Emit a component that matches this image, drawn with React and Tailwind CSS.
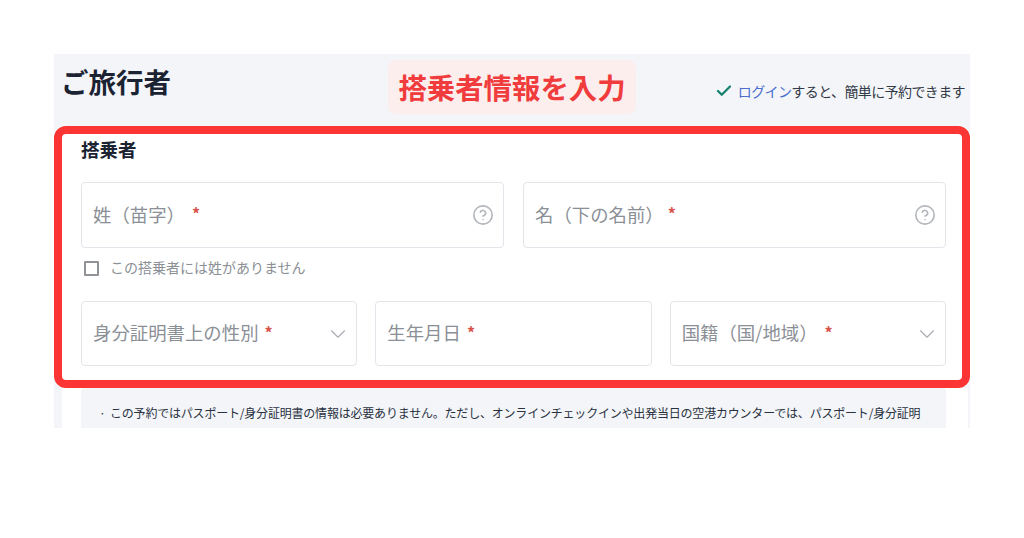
import React from 'react';
import { Check, CircleHelp, ChevronDown } from 'lucide-react';

const font = "font-['Noto_Sans_CJK_JP','Noto_Sans',sans-serif]";

// required mark next to placeholders
const Star = ({ className = '' }) => (
  <span className={`mt-[-2px] text-[16px] leading-none font-bold text-[#d8534c] ${className}`}>*</span>
);

const Field = ({ label, gap = 'ml-[7px]', icon, className = '' }) => (
  <div className={`flex items-center justify-between rounded-[4px] border border-[#e3e5ea] bg-white ${className}`}>
    <div className="mt-[-2px] flex items-center text-[18.4px] leading-none text-[#8b8f96]">
      <span>{label}</span>
      <Star className={gap} />
    </div>
    {icon}
  </div>
);

const HelpIcon = () => <CircleHelp size={22} strokeWidth={1.8} className="text-[#b4b7bc]" />;
const Chevron = () => <ChevronDown size={26} strokeWidth={1} className="text-[#a9acb2]" />;

export default function App() {
  return (
    <div className={`min-h-[538px] bg-white pt-[54px] pl-[54px] ${font}`}>
      <div className="h-[374px] w-[916px] overflow-hidden bg-[#f3f5f9]">
        {/* header */}
        <div className="flex h-[72px] items-start">
          <h1 className="mt-[7px] ml-[7px] w-[327px] text-[27.5px] leading-[40px] font-bold text-[#1b2333]">ご旅行者</h1>
          <div className="mt-[6px] flex h-[54px] w-[248px] items-center justify-center rounded-[8px] bg-[#fdeeee] text-[28.4px] font-bold text-[#f03c3c]">
            搭乗者情報を入力
          </div>
          <div className="mt-[27px] ml-auto mr-[5px] flex items-center text-[14px] leading-5 tracking-[-0.6px] text-[#333a47]">
            <Check size={18} strokeWidth={3} className="mr-[5px] text-[#16806f]" />
            <span className="text-[#4a6fd0]">ログイン</span>
            <span>すると、簡単に予約できます</span>
          </div>
        </div>

        {/* passenger form */}
        <div className="h-[262px] rounded-[12px] border-8 border-[#fb3434] bg-white pt-[3px] pr-[16px] pl-[19px]">
          <h2 className="text-[18.5px] leading-6 font-bold text-[#1b2333]">搭乗者</h2>
          <div className="mt-[21px] flex gap-[19px]">
            <Field label="姓（苗字）" icon={<HelpIcon />} className="h-[66px] flex-1 pr-[9px] pl-[11px]" />
            <Field label="名（下の名前）" gap="ml-[4px]" icon={<HelpIcon />} className="h-[66px] flex-1 pr-[9px] pl-[11px]" />
          </div>
          <label className="mt-[10px] flex h-[20px] items-center pl-[3px] text-[14px] leading-none text-[#8b8f96]">
            <span className="mr-[11px] h-[15px] w-[15px] rounded-[1px] border-2 border-[#8f9297]" />
            <span className="mt-[-3px]">この搭乗者には姓がありません</span>
          </label>
          <div className="mt-[23px] grid grid-cols-3 gap-[18px]">
            <Field label="身分証明書上の性別" gap="ml-[6px]" icon={<Chevron />} className="h-[65px] pr-[5px] pl-[11px]" />
            <Field label="生年月日" gap="ml-[6px]" className="h-[65px] pl-[11px]" />
            <Field label="国籍（国/地域）" icon={<Chevron />} className="h-[65px] pr-[5px] pl-[11px]" />
          </div>
        </div>

        {/* notice, cut off at the bottom */}
        <div className="ml-[8px] h-[40px] w-[906px] bg-white pl-[19px]">
          <div className="flex h-[40px] w-[865px] rounded-t-[4px] bg-[#f3f5f9] pt-[15px] pl-[18px] text-[12px] leading-5 tracking-[-0.2px] whitespace-nowrap text-[#2a3140]">
            <span className="w-[11px]">·</span>
            この予約ではパスポート/身分証明書の情報は必要ありません。ただし、オンラインチェックインや出発当日の空港カウンターでは、パスポート/身分証明
          </div>
        </div>
      </div>
    </div>
  );
}
